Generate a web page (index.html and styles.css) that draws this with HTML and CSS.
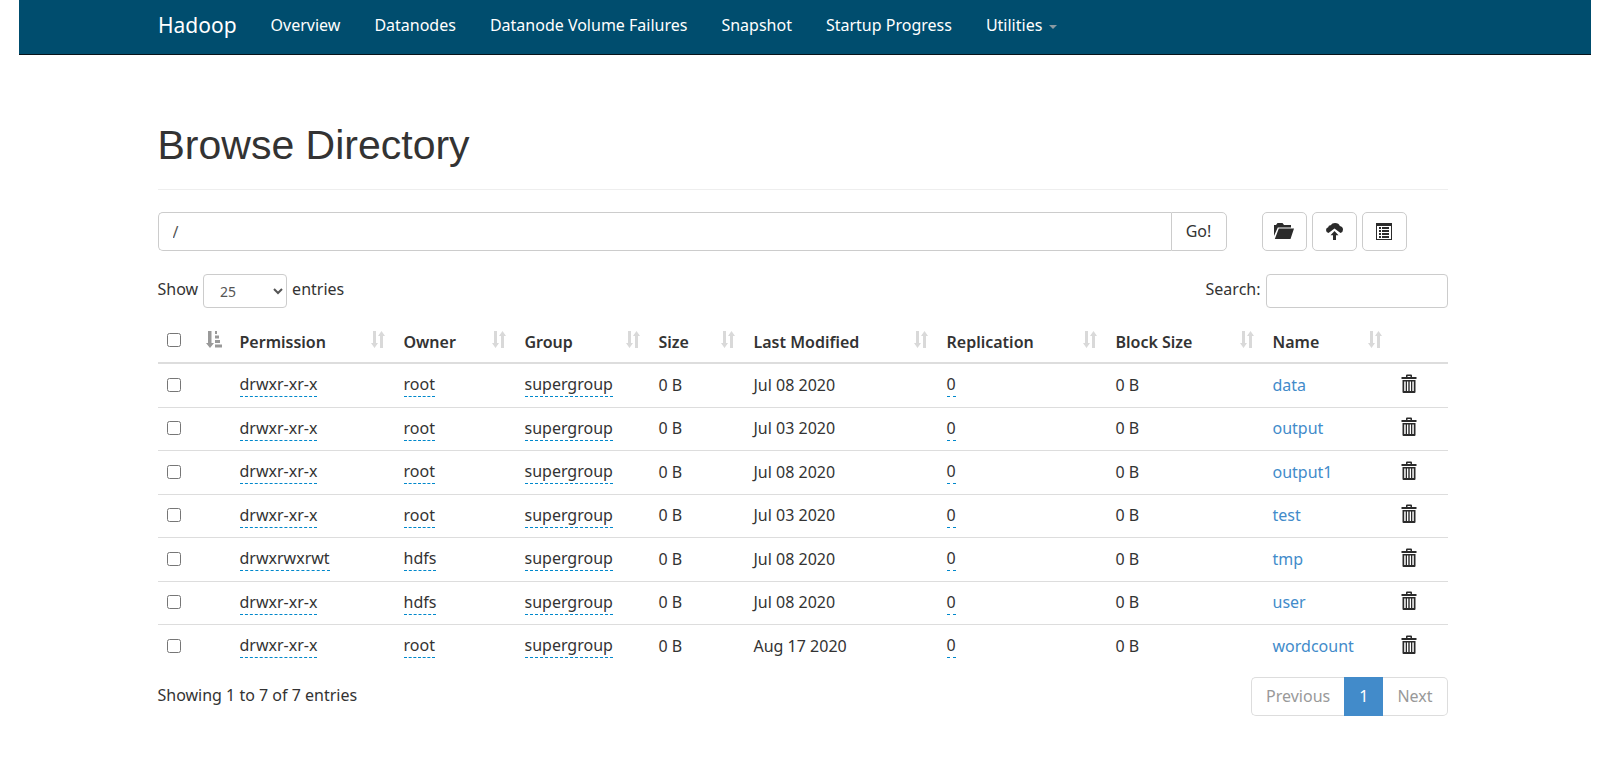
FILE: index.html
```html
<!DOCTYPE html>
<html lang="en">
<head>
<meta charset="utf-8">
<title>Browsing HDFS</title>
<link rel="stylesheet" href="styles.css">
</head>
<body>
<svg class="sprite" aria-hidden="true">
  <symbol id="trash" viewBox="0 0 16 20"><path fill-rule="evenodd" d="M5 3V1.500Q5 .5 6 .5h4q1 0 1 1V3h4.500v2H.5V3zM6.500 2v1h3V2zM1.500 6h13v12q0 1-1 1h-11q-1 0-1-1zM3.200 7.500V17h1.500V7.500zM6 7.500V17h1.300V7.500zM8.700 7.500V17H10V7.500zM11.300 7.500V17h1.500V7.500z"/></symbol>
  <symbol id="sort" viewBox="0 0 16 17"><path d="M3 0h3v12h2l-3.500 5L1 12h2zM10 17V5H8l3.500-5L15 5h-2v12z"/></symbol>
  <symbol id="sort-asc" viewBox="0 0 16 17"><path d="M2 0h3.500v12H8l-4 5-4-5h2zM9 0h2v3H9zM9 4.500h4v3H9zM9 9h5v3H9zM9 13.500h7v3H9z"/></symbol>
</svg>
<nav class="navbar">
  <div class="navbar-inner">
    <a class="brand" href="#">Hadoop</a>
    <a class="nav-link" href="#">Overview</a>
    <a class="nav-link" href="#">Datanodes</a>
    <a class="nav-link" href="#">Datanode Volume Failures</a>
    <a class="nav-link" href="#">Snapshot</a>
    <a class="nav-link" href="#">Startup Progress</a>
    <a class="nav-link" href="#">Utilities <span class="caret"></span></a>
  </div>
</nav>
<main class="container">
  <h1 class="page-title">Browse Directory</h1>
  <div class="path-row">
    <form class="path-form">
      <input class="path-input" type="text" value="/" aria-label="Directory">
      <button class="btn go" type="button">Go!</button>
    </form>
    <div class="actions">
      <button class="btn icon-btn" type="button" aria-label="Create directory"><svg class="icon-folder" viewBox="0 0 20 16"><path d="M0 13V2h2L3.500 0h5L10 2h7v2.500H3.800zM4.800 5.500H20L16.500 16H.8z"/></svg></button>
      <button class="btn icon-btn" type="button" aria-label="Upload files"><svg class="icon-upload" viewBox="0 0 17 17"><path d="M2.500 10Q0 9.500 0 7 0 4.800 2.200 4.300 2.500 2 4.700 2.200 6 0 9 0q4 0 4.800 3Q17 3.500 17 6.700q0 2.600-2.500 3.300L8.500 5.500zM8.500 8l4 4.200H10V17H7v-4.800H4.500z"/></svg></button>
      <button class="btn icon-btn" type="button" aria-label="Cut and paste"><svg class="icon-list" viewBox="0 0 16 17"><path fill-rule="evenodd" d="M0 0h16v17H0zM1 3v13h14V3z"/><path d="M3 4h2v2H3zM6 4h7v2H6zM3 7h2v2H3zM6 7h7v2H6zM3 10h2v2H3zM6 10h7v2H6zM3 13h2v2H3zM6 13h7v2H6z"/></svg></button>
    </div>
  </div>
  <div class="controls">
    <label class="control">Show <select class="length-select"><option>25</option></select> entries</label>
    <label class="control">Search: <input class="search-input" type="search"></label>
  </div>
  <table class="files">
    <colgroup><col class="c-check"><col class="c-perm"><col class="c-owner"><col class="c-group"><col class="c-size"><col class="c-date"><col class="c-repl"><col class="c-block"><col class="c-name"><col class="c-trash"></colgroup>
    <thead>
      <tr>
        <th><div class="head"><input class="check" type="checkbox" aria-label="Select all"><svg class="sort active"><use href="#sort-asc"/></svg></div></th>
        <th><div class="head">Permission<svg class="sort"><use href="#sort"/></svg></div></th>
        <th><div class="head">Owner<svg class="sort"><use href="#sort"/></svg></div></th>
        <th><div class="head">Group<svg class="sort"><use href="#sort"/></svg></div></th>
        <th><div class="head">Size<svg class="sort"><use href="#sort"/></svg></div></th>
        <th><div class="head">Last Modified<svg class="sort"><use href="#sort"/></svg></div></th>
        <th><div class="head">Replication<svg class="sort"><use href="#sort"/></svg></div></th>
        <th><div class="head">Block Size<svg class="sort"><use href="#sort"/></svg></div></th>
        <th><div class="head">Name<svg class="sort"><use href="#sort"/></svg></div></th>
        <th></th>
      </tr>
    </thead>
    <tbody>
      <tr><td><input class="check" type="checkbox" aria-label="Select data"></td><td><span class="editable">drwxr-xr-x</span></td><td><span class="editable">root</span></td><td><span class="editable">supergroup</span></td><td>0 B</td><td>Jul 08 2020</td><td><span class="editable">0</span></td><td>0 B</td><td><a href="#">data</a></td><td><button class="trash" type="button" aria-label="Delete data"><svg class="trash-icon"><use href="#trash"/></svg></button></td></tr>
      <tr><td><input class="check" type="checkbox" aria-label="Select output"></td><td><span class="editable">drwxr-xr-x</span></td><td><span class="editable">root</span></td><td><span class="editable">supergroup</span></td><td>0 B</td><td>Jul 03 2020</td><td><span class="editable">0</span></td><td>0 B</td><td><a href="#">output</a></td><td><button class="trash" type="button" aria-label="Delete output"><svg class="trash-icon"><use href="#trash"/></svg></button></td></tr>
      <tr><td><input class="check" type="checkbox" aria-label="Select output1"></td><td><span class="editable">drwxr-xr-x</span></td><td><span class="editable">root</span></td><td><span class="editable">supergroup</span></td><td>0 B</td><td>Jul 08 2020</td><td><span class="editable">0</span></td><td>0 B</td><td><a href="#">output1</a></td><td><button class="trash" type="button" aria-label="Delete output1"><svg class="trash-icon"><use href="#trash"/></svg></button></td></tr>
      <tr><td><input class="check" type="checkbox" aria-label="Select test"></td><td><span class="editable">drwxr-xr-x</span></td><td><span class="editable">root</span></td><td><span class="editable">supergroup</span></td><td>0 B</td><td>Jul 03 2020</td><td><span class="editable">0</span></td><td>0 B</td><td><a href="#">test</a></td><td><button class="trash" type="button" aria-label="Delete test"><svg class="trash-icon"><use href="#trash"/></svg></button></td></tr>
      <tr><td><input class="check" type="checkbox" aria-label="Select tmp"></td><td><span class="editable">drwxrwxrwt</span></td><td><span class="editable">hdfs</span></td><td><span class="editable">supergroup</span></td><td>0 B</td><td>Jul 08 2020</td><td><span class="editable">0</span></td><td>0 B</td><td><a href="#">tmp</a></td><td><button class="trash" type="button" aria-label="Delete tmp"><svg class="trash-icon"><use href="#trash"/></svg></button></td></tr>
      <tr><td><input class="check" type="checkbox" aria-label="Select user"></td><td><span class="editable">drwxr-xr-x</span></td><td><span class="editable">hdfs</span></td><td><span class="editable">supergroup</span></td><td>0 B</td><td>Jul 08 2020</td><td><span class="editable">0</span></td><td>0 B</td><td><a href="#">user</a></td><td><button class="trash" type="button" aria-label="Delete user"><svg class="trash-icon"><use href="#trash"/></svg></button></td></tr>
      <tr><td><input class="check" type="checkbox" aria-label="Select wordcount"></td><td><span class="editable">drwxr-xr-x</span></td><td><span class="editable">root</span></td><td><span class="editable">supergroup</span></td><td>0 B</td><td>Aug 17 2020</td><td><span class="editable">0</span></td><td>0 B</td><td><a href="#">wordcount</a></td><td><button class="trash" type="button" aria-label="Delete wordcount"><svg class="trash-icon"><use href="#trash"/></svg></button></td></tr>
    </tbody>
  </table>
  <div class="footer-row">
    <div class="info">Showing 1 to 7 of 7 entries</div>
    <div class="pagination"><a class="page" href="#">Previous</a><a class="page current" href="#">1</a><a class="page" href="#">Next</a></div>
  </div>
</main>
</body>
</html>
```
FILE: styles.css
```css
* { box-sizing: border-box; }
body {
  margin: 0;
  background: #fff;
  color: #333;
  font: 16px/24px "Noto Sans", "Open Sans", sans-serif;
}
a { color: #428bca; text-decoration: none; }
button, input, select { font: inherit; color: inherit; }
.sprite { display: none; }
.container { width: 100%; max-width: 1290px; margin: 0 auto; }
.navbar {
  margin: 0 14px 0 19px;
  background: #004d6e;
  border-bottom: 1px solid #08131a;
}
.navbar-inner {
  display: flex;
  align-items: center;
  max-width: 1294px;
  height: 54px;
  margin: 0 auto;
  padding-bottom: 4px;
}
.brand { padding-right: 17px; color: #fff; font-size: 21px; }
.nav-link { padding: 0 17px; color: #fff; white-space: nowrap; }
.caret {
  display: inline-block;
  margin-left: 3px;
  border: 4px solid transparent;
  border-top-color: #8a9aa2;
  border-bottom: 0;
  vertical-align: middle;
}
.page-title {
  margin: 67px 0 22px;
  padding-bottom: 21px;
  border-bottom: 1px solid #eee;
  font: 41px/46px "Liberation Sans", Arial, sans-serif;
}
.path-row { display: flex; gap: 35px; padding-right: 41px; }
.path-form { display: flex; flex: 1; }
.path-input {
  flex: 1;
  min-width: 0;
  height: 39px;
  padding: 0 14px;
  border: 1px solid #ccc;
  border-right: 0;
  border-radius: 5px 0 0 5px;
  background: #fff;
  color: #555;
}
.btn {
  display: flex;
  align-items: center;
  justify-content: center;
  height: 39px;
  padding: 0 0 1px;
  border: 1px solid #ccc;
  border-radius: 5px;
  background: #fff;
}
.go { width: 56px; border-radius: 0 5px 5px 0; }
.actions { display: flex; gap: 5px; }
.icon-btn { width: 45px; }
.icon-btn svg { fill: #2b2b2b; }
.icon-folder { width: 20px; height: 16px; }
.icon-upload { width: 17px; height: 17px; }
.icon-list { width: 16px; height: 17px; }
.controls { display: flex; justify-content: space-between; margin-top: 23px; }
.control { display: flex; gap: 5px; line-height: 30px; }
.length-select, .search-input {
  height: 34px;
  border: 1px solid #ccc;
  border-radius: 4px;
  background: #fff;
  color: #555;
}
.length-select { width: 84px; padding: 0 4px 0 12px; font-size: 14px; }
.search-input { width: 182px; padding: 0 12px; font-size: 14px; }
.files { width: 100%; margin-top: 13px; border-collapse: collapse; table-layout: fixed; }
.c-check { width: 73px; }
.c-perm { width: 164px; }
.c-owner { width: 121px; }
.c-group { width: 134px; }
.c-size { width: 95px; }
.c-date { width: 193px; }
.c-repl { width: 169px; }
.c-block { width: 157px; }
.c-name { width: 128px; }
.c-trash { width: 56px; }
.files th { height: 42px; padding: 0 9px; border-bottom: 2px solid #ddd; font-weight: 600; text-align: left; white-space: nowrap; }
.head { display: flex; align-items: center; justify-content: space-between; }
.sort { width: 16px; height: 17px; margin-bottom: 4px; fill: #d9d9d9; }
.sort.active { fill: #999; }
.files td { height: 43px; padding: 0 9px 1px; border-bottom: 1px solid #ddd; }
.files tbody tr:nth-child(odd) td { height: 44px; }
.files tbody tr:last-child td { border-bottom: 0; }
.check { display: block; width: 14px; height: 14px; margin: 0; }
.head .check { margin-bottom: 4px; }
.editable { display: inline-block; border-bottom: 1px dashed #0088cc; }
.trash { display: block; margin-bottom: 2px; padding: 0; border: 0; background: none; }
.trash-icon { display: block; width: 16px; height: 20px; fill: #2b2b2b; }
.footer-row { display: flex; justify-content: space-between; align-items: flex-start; margin-top: 9px; }
.info { line-height: 36px; }
.pagination { display: flex; }
.page { height: 39px; padding: 0 14px; border: 1px solid #ddd; color: #999; line-height: 37px; }
.page:first-child { border-right: 0; border-radius: 5px 0 0 5px; }
.page:last-child { border-left: 0; border-radius: 0 5px 5px 0; }
.page.current { border-color: #428bca; background: #428bca; color: #fff; }
```
